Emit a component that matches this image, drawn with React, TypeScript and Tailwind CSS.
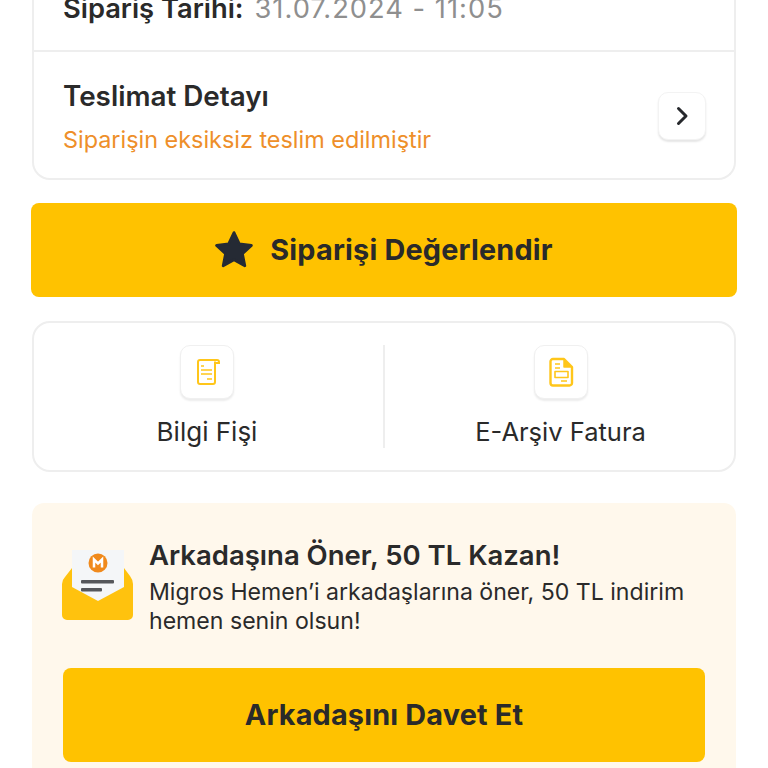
import React from "react";

function Tile({ children }: { children: React.ReactNode }) {
  return (
    <div className="w-[54px] h-[54px] rounded-[10px] bg-white border border-[#f0f0f0] shadow-[0_2px_2px_rgba(0,0,0,0.08)] flex items-center justify-center">
      {children}
    </div>
  );
}

export default function App() {
  return (
    <div className="w-[768px] h-[768px] overflow-hidden bg-white text-[#2a2a2a] font-['Inter',sans-serif]">
      <div className="-mt-[20px] px-[32px] flex flex-col">
        <div className="rounded-b-[18px] border-2 border-t-0 border-[#eeeeee] bg-white">
          <div className="h-[72px] pl-[29px] pt-[13px] flex items-start gap-[11px] text-[27.300px] leading-[32px] border-b-2 border-[#eeeeee] whitespace-nowrap">
            <span className="font-semibold">Sipariş Tarihi:</span>
            <span className="text-[#8f8f8f] tracking-[1px]">31.07.2024 - 11:05</span>
          </div>
          <div className="h-[126px] pl-[29px] pr-[28px] flex items-center justify-between">
            <div className="flex flex-col gap-[13px] mt-[5px]">
              <div className="text-[27.800px] leading-[32px] font-semibold">Teslimat Detayı</div>
              <div className="text-[23.400px] leading-[30px] text-[#ee8f2a]">Siparişin eksiksiz teslim edilmiştir</div>
            </div>
            <div className="w-[48px] h-[48px] mt-[2px] rounded-[10px] bg-white border border-[#f3f3f3] shadow-[0_2px_2px_rgba(0,0,0,0.1)] flex items-center justify-center">
              <svg width="24" height="24" viewBox="0 0 24 24" fill="none" stroke="#26282c" strokeWidth="3" strokeLinecap="round" strokeLinejoin="round">
                <path d="M8.500 4.500 16 12l-7.500 7.500" />
              </svg>
            </div>
          </div>
        </div>

        <div className="-mx-[1px] mt-[23px] h-[94px] pr-[3px] rounded-[8px] bg-[#ffc200] flex items-center justify-center gap-[14px]">
          <svg width="44" height="44" viewBox="0 0 24 24" fill="#252a34" stroke="#252a34" strokeWidth="1.500" strokeLinejoin="round">
            <path d="M12 2.500l2.900 6.200 6.600.8-4.900 4.500 1.300 6.600-5.900-3.300-5.900 3.300 1.300-6.600-4.900-4.500 6.600-.8z" />
          </svg>
          <span className="text-[28.800px] font-bold tracking-[0.2px]">Siparişi Değerlendir</span>
        </div>

        <div className="mt-[24px] h-[151px] rounded-[18px] border-2 border-[#eeeeee] bg-white flex items-center">
          <div className="flex-1 h-[103px] border-r-2 border-[#eeeeee]">
            <div className="mr-[3px] flex flex-col items-center gap-[17px]">
              <Tile>
                <svg width="30" height="30" viewBox="0 0 30 30" fill="none" stroke="#ffc61a" strokeWidth="2">
                  <path d="M25 3H8a2 2 0 0 0-2 2v20a2 2 0 0 0 2 2h13a2 2 0 0 0 2-2V4.500" />
                  <path d="M23 4c0-1 1-1 2-1s2 .5 2 2v1h-4" />
                  <path d="M9 9h3M9 13h11M9 17h11M15 22h5" strokeWidth="1.500" />
                </svg>
              </Tile>
              <span className="text-[26px] leading-[32px]">Bilgi Fişi</span>
            </div>
          </div>
          <div className="flex-1 h-[103px] flex flex-col items-center gap-[17px]">
            <div className="ml-[2px]">
              <Tile>
                <svg width="30" height="32" viewBox="0 0 30 32" fill="none" stroke="#ffc61a" strokeWidth="2.400" strokeLinejoin="round">
                  <path d="M7 3h11l8 8v16a2.500 2.500 0 0 1-2.500 2.500h-16.500a2.500 2.500 0 0 1-2.500-2.500V5.500A2.500 2.500 0 0 1 7 3z" />
                  <path d="M18 3v8h8" fill="#ffc61a" strokeWidth="1.500" />
                  <path d="M9 8h5M9 12h5M15 25h6" strokeWidth="1.600" />
                  <rect x="9" y="15.500" width="13" height="6" strokeWidth="1.600" />
                </svg>
              </Tile>
            </div>
            <span className="ml-[2px] text-[25.500px] leading-[32px]">E-Arşiv Fatura</span>
          </div>
        </div>

        <div className="mt-[31px] rounded-t-[12px] bg-[#fff8ec] px-[31px] pt-[35px] pb-[40px]">
          <div className="flex items-start gap-[15px]">
            <svg className="mt-[10px] -ml-[1px] shrink-0" width="72" height="74" viewBox="0 0 72 74">
              <path d="M0 36Q0 32 3 29L10 20H62L68 28Q71 32 71 36V67a5 5 0 0 1-5 5H5a5 5 0 0 1-5-5z" fill="#ffc20e" />
              <path d="M10 2H62V39L36 53L10 39z" fill="#f4f6f8" />
              <circle cx="36" cy="15" r="9.500" fill="#f08a1d" />
              <path d="M32 19.500v-8l4 4 4-4v8" fill="none" stroke="#fff" strokeWidth="2.500" />
              <rect x="19" y="32" width="33" height="3.500" rx="1" fill="#55575b" />
              <rect x="19" y="40" width="21" height="3.500" rx="1" fill="#55575b" />
            </svg>
            <div className="flex flex-col">
              <div className="text-[27.500px] leading-[34px] font-semibold whitespace-nowrap">Arkadaşına Öner, 50 TL Kazan!</div>
              <div className="text-[23.100px] leading-[29px] whitespace-nowrap mt-[6px]">
                Migros Hemen’i arkadaşlarına öner, 50 TL indirim
                <br />
                hemen senin olsun!
              </div>
            </div>
          </div>
          <div className="mt-[32px] h-[94px] rounded-[8px] bg-[#ffc200] flex items-center justify-center text-[28.800px] font-bold tracking-[0.2px]">
            Arkadaşını Davet Et
          </div>
        </div>
      </div>
    </div>
  );
}
